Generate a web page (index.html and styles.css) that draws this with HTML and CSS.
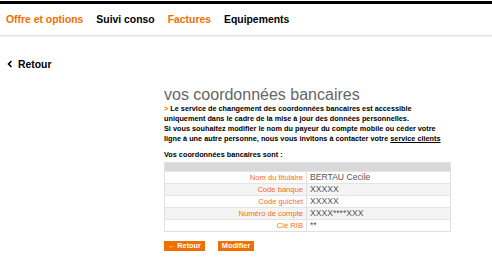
FILE: index.html
```html
<!DOCTYPE html>
<html lang="fr">
<head>
<meta charset="utf-8">
<link rel="stylesheet" href="styles.css">
</head>
<body>
<div class="topbar"></div>
<nav class="nav">
  <a class="nav-item orange">Offre et options</a>
  <a class="nav-item">Suivi conso</a>
  <a class="nav-item orange">Factures</a>
  <a class="nav-item">Equipements</a>
</nav>
<div class="back">
  <svg class="chev" width="6" height="8" viewBox="0 0 6 8"><path d="M4.5 1 L1.5 4 L4.5 7" fill="none" stroke="#000" stroke-width="1.6"/></svg>
  <span>Retour</span>
</div>
<main class="content">
  <h1 class="title">vos coordonnées bancaires</h1>
  <p class="info"><span class="arrow">&gt;</span> Le service de changement des coordonnées bancaires est accessible<br>
  uniquement dans le cadre de la mise à jour des données personnelles.<br>
  Si vous souhaitez modifier le nom du payeur du compte mobile ou céder votre<br>
  ligne à une autre personne, nous vous invitons à contacter votre <u>service clients</u></p>
  <p class="subtitle">Vos coordonnées bancaires sont :</p>
  <table class="bank">
    <tr class="head"><td colspan="2"></td></tr>
    <tr><td class="label">Nom du titulaire</td><td class="value">BERTAU Cecile</td></tr>
    <tr><td class="label">Code banque</td><td class="value">XXXXX</td></tr>
    <tr><td class="label">Code guichet</td><td class="value">XXXXX</td></tr>
    <tr><td class="label">Numéro de compte</td><td class="value">XXXX****XXX</td></tr>
    <tr><td class="label">Clé RIB</td><td class="value">**</td></tr>
  </table>
  <div class="buttons">
    <span class="btn">&#8592; Retour</span>
    <span class="btn">Modifier</span>
  </div>
</main>
</body>
</html>
```
FILE: styles.css
```css
html, body { margin: 0; padding: 0; background: #fff; }
body { font-family: "Liberation Sans", Arial, sans-serif; color: #000; }
.topbar { height: 3px; background: #000; margin-top: 1px; }
.nav {
  display: flex;
  gap: 13px;
  align-items: center;
  height: 31px;
  padding-left: 6px;
  border-bottom: 1px solid #e2e2e2;
  box-shadow: 0 1px 1px #f2f2f2;
}
.nav-item { font-size: 10.4px; font-weight: bold; color: #000; }
.nav-item.orange { color: #f16e00; }
.back {
  display: flex;
  align-items: center;
  gap: 5px;
  margin-top: 21px;
  padding-left: 7px;
  font-size: 10.4px;
  font-weight: bold;
  height: 14px;
}
.content { margin-left: 164px; margin-top: 15px; width: 287px; }
.title {
  margin: 0;
  font-size: 16px;
  font-weight: normal;
  color: #666;
  line-height: 18px;
}
.info {
  margin: 0;
  font-size: 7.3px;
  font-weight: bold;
  line-height: 10px;
  white-space: nowrap;
}
.info .arrow { color: #f16e00; }
.info u { text-decoration: underline; }
.subtitle {
  margin: 6px 0 0;
  font-size: 7.3px;
  font-weight: bold;
  line-height: 10px;
}
.bank {
  margin-top: 2px;
  width: 287px;
  border-collapse: collapse;
  border: 1px solid #e0e0e0;
}
.bank td { height: 11px; padding: 0 3px; border-top: 1px solid #e4e4e4; line-height: 11px; }
.bank tr.head td { background: #d9d9d9; height: 8px; border: none; }
.bank tr:nth-child(odd) td { background: #f4f4f4; }
.bank tr.head td { background: #d9d9d9; }
.bank .label { width: 135px; text-align: right; color: #f26d1f; border-right: 1px solid #e0e0e0; font-size: 7.6px; }
.bank .value { color: #555; font-size: 8.6px; }
.buttons { display: flex; gap: 13px; margin-top: 9px; }
.btn {
  background: #f16e00;
  color: #fff;
  font-size: 7.3px;
  font-weight: bold;
  padding: 0 4px;
  height: 10px;
  line-height: 10px;
}
```
